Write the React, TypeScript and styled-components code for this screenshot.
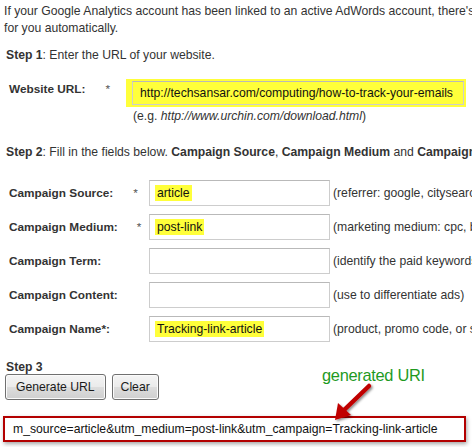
import React from 'react'
import styled, { createGlobalStyle } from 'styled-components'

const GlobalStyle = createGlobalStyle`
  html, body {
    margin: 0;
    padding: 0;
    background: #ffffff;
  }
  body {
    font-family: 'Liberation Sans', Arial, sans-serif;
    font-size: 12.2px;
    line-height: 17px;
    color: #333333;
  }
`

const Page = styled.div`
  width: 472px;
  height: 447px;
  overflow: hidden;
  padding: 3px 0 0 4px;
  box-sizing: border-box;
  position: relative;
`

const Intro = styled.div`
  white-space: nowrap;
`

const Step = styled.div<{ $top: number }>`
  margin-top: ${(p) => p.$top}px;
  padding-left: 2px;
  white-space: nowrap;
  b {
    font-weight: 700;
  }
`

const Row = styled.div<{ $top: number; $align?: string }>`
  display: flex;
  align-items: ${(p) => p.$align || 'center'};
  margin-top: ${(p) => p.$top}px;
  padding-left: 5px;
  white-space: nowrap;
`

const Label = styled.div<{ $width: number; $nudge?: number }>`
  width: ${(p) => p.$width}px;
  flex: none;
  font-weight: 700;
  font-size: 11.8px;
  display: flex;
  padding-top: ${(p) => p.$nudge || 0}px;
`

const Star = styled.span<{ $gap: number }>`
  margin-left: ${(p) => p.$gap}px;
  font-weight: 400;
  color: #555555;
`

const Glow = styled.div`
  background: #ffff3a;
  padding: 2px 2px 2px 6px;
  flex: none;
`

const Field = styled.div<{ $width: number; $fill?: string; $pad?: number; $height?: number }>`
  width: ${(p) => p.$width}px;
  height: ${(p) => p.$height || 26}px;
  box-sizing: border-box;
  border: 1px solid #cdcdcd;
  border-top-color: #b9b9b9;
  background: ${(p) => p.$fill || '#ffffff'};
  display: flex;
  align-items: center;
  padding-left: ${(p) => p.$pad ?? 5}px;
  color: #111111;
  flex: none;
  overflow: hidden;
`

const Mark = styled.span`
  background: #ffff3a;
  padding: 0 2px;
  line-height: 16px;
`

const Hint = styled.div`
  margin-left: 3px;
`

const Example = styled.div`
  padding-left: 129px;
  margin-top: 1px;
  i {
    font-style: italic;
  }
`

const Buttons = styled.div`
  display: flex;
  gap: 6px;
  margin-top: -2px;
  padding-left: 1px;
`

const Button = styled.button<{ $pad: number }>`
  height: 26px;
  padding: 0 ${(p) => p.$pad}px;
  font-family: 'Liberation Sans', Arial, sans-serif;
  font-size: 12.2px;
  color: #1a1a1a;
  border: 1px solid #707070;
  border-radius: 3px;
  background: linear-gradient(#f4f4f4 0%, #ebebeb 48%, #dddddd 52%, #cfcfcf 100%);
  box-shadow: inset 0 0 0 1px #fbfbfb;
`

const Output = styled.div`
  margin-top: 16px;
  margin-left: -1px;
  width: 463px;
  height: 26px;
  box-sizing: border-box;
  border: 2px solid #b30000;
  box-shadow: 1px 2px 4px rgba(0, 0, 0, 0.35);
  display: flex;
  align-items: center;
  padding-left: 8px;
  color: #111111;
  white-space: nowrap;
  overflow: hidden;
  background: #ffffff;
`

const Callout = styled.div`
  position: absolute;
  left: 322px;
  top: 365px;
  font-size: 16.4px;
  line-height: 20px;
  letter-spacing: -0.3px;
  color: #1f9a1f;
  white-space: nowrap;
`

const Arrow = styled.svg`
  position: absolute;
  left: 326px;
  top: 383px;
  overflow: visible;
`

const campaignRows = [
  { label: 'Campaign Source:', star: 20, value: 'article', hint: '(referrer: google, citysearch, newsletter4)', top: 19 },
  { label: 'Campaign Medium:', star: 19, value: 'post-link', hint: '(marketing medium: cpc, banner, email)', top: 8 },
  { label: 'Campaign Term:', star: 0, value: '', hint: '(identify the paid keywords)', top: 8 },
  { label: 'Campaign Content:', star: 0, value: '', hint: '(use to differentiate ads)', top: 8 },
  { label: 'Campaign Name*:', star: 0, value: 'Tracking-link-article', hint: '(product, promo code, or slogan)', top: 8 },
]

export default function App() {
  return (
    <Page>
      <GlobalStyle />
      <Intro>
        If your Google Analytics account has been linked to an active AdWords account, there's no need to tag your
        AdWords links
      </Intro>
      <Intro>for you automatically.</Intro>

      <Step $top={10}>
        <b>Step 1</b>: Enter the URL of your website.
      </Step>

      <Row $top={15} $align="flex-start">
        <Label $width={117} $nudge={2}>
          Website URL:
          <Star $gap={20}>*</Star>
        </Label>
        <Glow>
          <Field $width={332} $fill="#ffff3a" $pad={7} $height={24}>
            http://techsansar.com/computing/how-to-track-your-emails
          </Field>
        </Glow>
      </Row>
      <Example>
        (e.g. <i>http://www.urchin.com/download.html</i>)
      </Example>

      <Step $top={19}>
        <b>Step 2</b>: Fill in the fields below. <b>Campaign Source</b>, <b>Campaign Medium</b> and{' '}
        <b>Campaign Name</b> should always be used.
      </Step>

      {campaignRows.map((r) => (
        <Row key={r.label} $top={r.top}>
          <Label $width={140}>
            {r.label}
            {r.star > 0 && <Star $gap={r.star}>*</Star>}
          </Label>
          <Field $width={181}>{r.value && <Mark>{r.value}</Mark>}</Field>
          <Hint>{r.hint}</Hint>
        </Row>
      ))}

      <Step $top={17}>
        <b>Step 3</b>
      </Step>
      <Buttons>
        <Button $pad={10}>Generate URL</Button>
        <Button $pad={8}>Clear</Button>
      </Buttons>

      <Output>m_source=article&amp;utm_medium=post-link&amp;utm_campaign=Tracking-link-article</Output>

      <Callout>generated URI</Callout>
      <Arrow width="50" height="42" viewBox="0 0 50 42">
        <defs>
          <filter id="arrowShadow" x="-30%" y="-30%" width="160%" height="160%">
            <feDropShadow dx="1.5" dy="1.5" stdDeviation="1.2" floodColor="#000" floodOpacity="0.45" />
          </filter>
        </defs>
        <g filter="url(#arrowShadow)">
          <line x1="43" y1="3" x2="17" y2="28" stroke="#c00000" strokeWidth="4.5" strokeLinecap="round" />
          <polygon points="9,37 12,20 25,32" fill="#c00000" />
        </g>
      </Arrow>
    </Page>
  )
}
